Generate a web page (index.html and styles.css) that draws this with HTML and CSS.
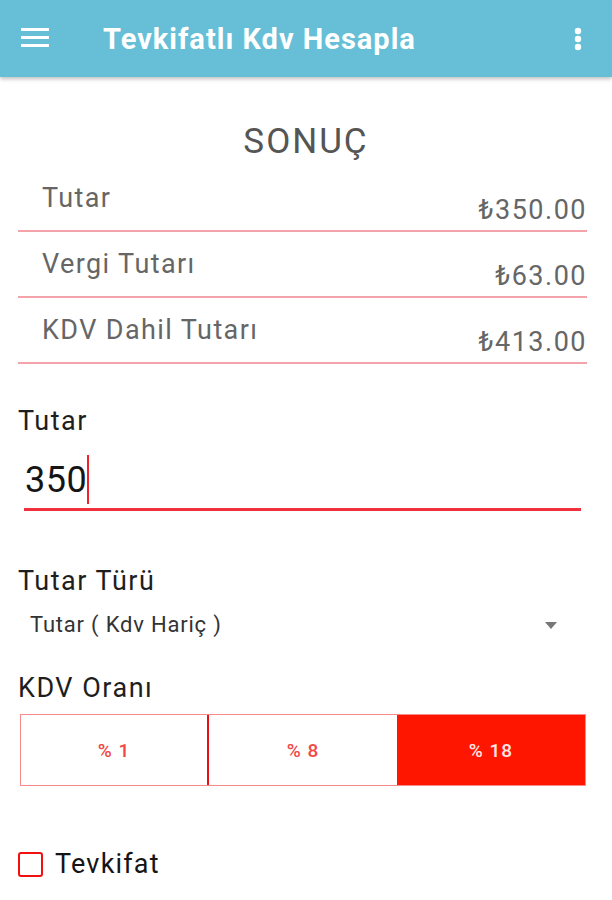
FILE: index.html
```html
<!DOCTYPE html>
<html lang="tr">
<head>
    <meta charset="UTF-8">
    <meta name="viewport" content="width=device-width, initial-scale=1.0">
    <title>Tevkifatlı Kdv Hesapla</title>
    <link rel="stylesheet" href="styles.css">
</head>
<body>
    <header class="toolbar">
        <svg class="menu-icon" width="28" height="19" viewBox="0 0 28 19">
            <rect x="0" y="0" width="28" height="3" fill="#fff"/>
            <rect x="0" y="8" width="28" height="3" fill="#fff"/>
            <rect x="0" y="16" width="28" height="3" fill="#fff"/>
        </svg>
        <h1 class="title">Tevkifatlı Kdv Hesapla</h1>
        <svg class="more-icon" width="8" height="24" viewBox="0 0 8 24">
            <circle cx="4" cy="4" r="3.2" fill="#fff"/>
            <circle cx="4" cy="12" r="3.2" fill="#fff"/>
            <circle cx="4" cy="20" r="3.2" fill="#fff"/>
        </svg>
    </header>

    <main class="content">
        <h2 class="result-title">SONUÇ</h2>

        <div class="results">
            <div class="result-row">
                <span class="result-label">Tutar</span>
                <span class="result-value">₺350.00</span>
            </div>
            <div class="result-row">
                <span class="result-label">Vergi Tutarı</span>
                <span class="result-value">₺63.00</span>
            </div>
            <div class="result-row">
                <span class="result-label">KDV Dahil Tutarı</span>
                <span class="result-value">₺413.00</span>
            </div>
        </div>

        <label class="field-label label-amount">Tutar</label>
        <div class="field">
            <span class="field-text">350</span>
            <span class="cursor"></span>
        </div>

        <label class="field-label label-type">Tutar Türü</label>
        <div class="spinner">
            <span>Tutar ( Kdv Hariç )</span>
            <span class="spinner-arrow"></span>
        </div>

        <label class="field-label label-rate">KDV Oranı</label>
        <div class="segments">
            <button class="segment">% 1</button>
            <button class="segment">% 8</button>
            <button class="segment active">% 18</button>
        </div>

        <div class="check-row">
            <span class="checkbox"></span>
            <span class="check-text">Tevkifat</span>
        </div>
    </main>
</body>
</html>
```

FILE: styles.css
```css
body {
    margin: 0;
    font-family: Roboto, "Liberation Sans", sans-serif;
    background: #fff;
    color: #222;
}

.toolbar {
    height: 77px;
    background: #66bfd7;
    box-shadow: 0 2px 4px rgba(0, 0, 0, 0.25);
    display: flex;
    align-items: center;
    padding: 0 30px 0 21px;
}

.menu-icon {
    flex: none;
    margin-top: -2px;
}

.title {
    flex: 1;
    margin: 0 0 0 54px;
    font-size: 29px;
    letter-spacing: 1px;
    font-weight: bold;
    color: #fff;
}

.more-icon {
    flex: none;
}

.content {
    padding: 0;
}

.result-title {
    margin: 45px 0 0;
    text-align: center;
    font-size: 35px;
    letter-spacing: 2px;
    line-height: 40px;
    font-weight: normal;
    color: #555;
}

.results {
    margin: 4px 25px 0 18px;
}

.result-row {
    height: 64px;
    border-bottom: 2px solid #f5a3aa;
    display: flex;
    justify-content: space-between;
    align-items: flex-start;
    padding-left: 24px;
}

.result-label {
    padding-top: 16px;
    font-size: 27px;
    letter-spacing: 1.4px;
    line-height: 32px;
    color: #666;
}

.result-value {
    padding-top: 28px;
    font-size: 27px;
    letter-spacing: 1.5px;
    line-height: 32px;
    color: #666;
}

.field-label {
    display: block;
    margin-left: 18px;
    font-size: 27px;
    letter-spacing: 1.5px;
    line-height: 32px;
    color: #1e1e1e;
}

.label-amount {
    margin-top: 41px;
}

.field {
    margin: 18px 31px 0 24px;
    height: 49px;
    padding-bottom: 4px;
    border-bottom: 3px solid #f0303c;
    display: flex;
    align-items: center;
}

.field-text {
    font-size: 36px;
    letter-spacing: 0.5px;
    line-height: 44px;
    color: #151515;
    padding-left: 1px;
}

.cursor {
    width: 2px;
    height: 49px;
    background: #f0202c;
}

.label-type {
    margin-top: 54px;
}

.spinner {
    margin: 12px 55px 0 30px;
    display: flex;
    justify-content: space-between;
    align-items: center;
    font-size: 22px;
    letter-spacing: 0.8px;
    line-height: 32px;
    color: #333;
}

.spinner-arrow {
    width: 0;
    height: 0;
    border-left: 6px solid transparent;
    border-right: 6px solid transparent;
    border-top: 7px solid #777;
}

.label-rate {
    margin-top: 31px;
}

.segments {
    margin: 10px 26px 0 20px;
    display: grid;
    grid-template-columns: 1fr 1fr 1fr;
    height: 72px;
    border: 1.5px solid #f88a8a;
    box-sizing: border-box;
}

.segment {
    border: none;
    background: #fff;
    font-family: inherit;
    font-size: 19px;
    letter-spacing: 1px;
    font-weight: 500;
    color: #f04848;
    padding: 0;
}

.segment:first-child {
    border-right: 2px solid #e81010;
}

.segment.active {
    background: #ff1600;
    color: #ffe6e6;
}

.check-row {
    margin: 62px 0 0 18px;
    display: flex;
    align-items: center;
}

.checkbox {
    width: 25px;
    height: 25px;
    box-sizing: border-box;
    border: 2.5px solid #f01010;
    border-radius: 3px;
}

.check-text {
    margin-left: 12px;
    font-size: 27px;
    letter-spacing: 1.2px;
    line-height: 32px;
    color: #151515;
}
```
